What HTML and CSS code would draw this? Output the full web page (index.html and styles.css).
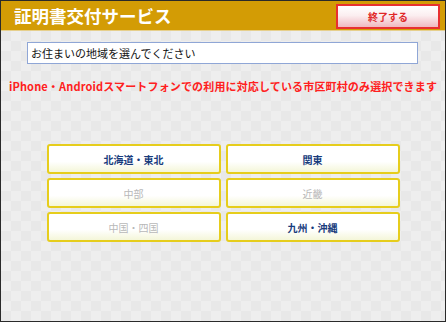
FILE: index.html
```html
<!DOCTYPE html>
<html lang="ja">
<head>
<meta charset="utf-8">
<link rel="stylesheet" href="styles.css">
</head>
<body>
<div class="frame">
  <header class="header">
    <h1 class="title">証明書交付サービス</h1>
    <button class="end-btn">終了する</button>
  </header>
  <main class="main">
    <div class="prompt">お住まいの地域を選んでください</div>
    <p class="notice">iPhone・Androidスマートフォンでの利用に対応している市区町村のみ選択できます</p>
    <div class="regions">
      <button class="region">北海道・東北</button>
      <button class="region">関東</button>
      <button class="region disabled">中部</button>
      <button class="region disabled">近畿</button>
      <button class="region disabled">中国・四国</button>
      <button class="region">九州・沖縄</button>
    </div>
  </main>
</div>
</body>
</html>
```

FILE: styles.css
```css
html, body {
  margin: 0;
  padding: 0;
}
body {
  font-family: "Noto Sans CJK JP", "Noto Sans", sans-serif;
}
.frame {
  box-sizing: border-box;
  width: 446px;
  height: 322px;
  border: 1px solid #2a2a2a;
  display: flex;
  flex-direction: column;
  background-color: #ebebeb;
  background-image: repeating-conic-gradient(#e8e8e8 0 25%, #eeeeee 0 50%);
  background-size: 20px 20px;
}
.header {
  height: 29px;
  background: #d39c05;
  border-bottom: 1px solid #e6cf8c;
  display: flex;
  align-items: center;
  justify-content: space-between;
  padding: 0 5px 0 13px;
}
.title {
  margin: 0;
  color: #ffffff;
  font-size: 17.5px;
  font-weight: bold;
  line-height: 1;
}
.end-btn {
  width: 104px;
  height: 25px;
  margin-top: 2px;
  border: 2px solid #e83030;
  background: linear-gradient(#ffffff 0%, #fbeef0 45%, #f0b8c0 100%);
  color: #e02828;
  font-family: inherit;
  font-size: 10px;
  font-weight: bold;
  padding: 0;
  cursor: pointer;
}
.main {
  display: flex;
  flex-direction: column;
  align-items: center;
  padding-top: 11px;
}
.prompt {
  box-sizing: border-box;
  width: 391px;
  height: 22px;
  background: #ffffff;
  border: 1px solid #8fa6d6;
  font-size: 11px;
  line-height: 20px;
  padding-left: 3px;
  color: #111111;
  align-self: flex-start;
  margin-left: 26px;
}
.notice {
  margin: 14px 0 0;
  color: #ff2020;
  font-size: 11px;
  font-weight: bold;
  line-height: 16px;
  white-space: nowrap;
  letter-spacing: 0.15px;
}
.regions {
  margin-top: 50px;
  display: grid;
  grid-template-columns: 174px 174px;
  column-gap: 5px;
  row-gap: 4px;
}
.region {
  height: 30px;
  border: 2px solid #e6cd1c;
  border-radius: 3px;
  background: linear-gradient(#ffffff 0%, #ffffff 60%, #f4f6d8 100%);
  color: #183c7c;
  font-family: inherit;
  font-size: 10px;
  font-weight: bold;
  padding: 0;
}
.region.disabled {
  color: #b8b8b8;
  font-weight: normal;
}
```
